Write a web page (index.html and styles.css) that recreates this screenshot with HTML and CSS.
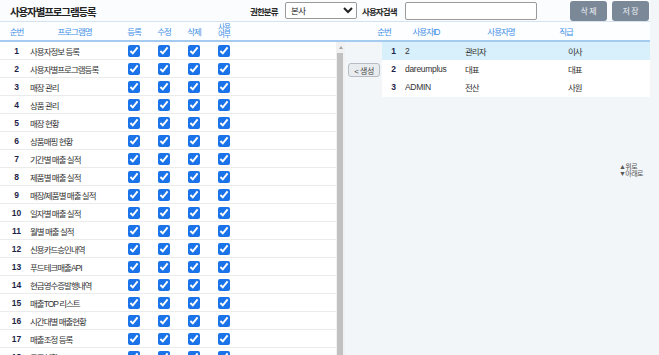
FILE: index.html
```html
<!DOCTYPE html>
<html lang="ko">
<head>
<meta charset="utf-8">
<title>사용자별프로그램등록</title>
<link rel="stylesheet" href="styles.css">
</head>
<body>
<div class="app">
  <div class="topbar">
    <div class="title">사용자별프로그램등록</div>
    <span class="lbl lbl-auth">권한분류</span>
    <select class="auth-select"><option>본사</option></select>
    <span class="lbl lbl-search">사용자검색</span>
    <input class="search" type="text">
    <div class="btns">
      <button class="btn">삭제</button>
      <button class="btn">저장</button>
    </div>
  </div>

  <div class="header">
    <div class="hleft">
      <span class="hnum">순번</span>
      <span>프로그램명</span>
      <span>등록</span>
      <span>수정</span>
      <span>삭제</span>
      <span class="two">사용<br>여부</span>
    </div>
    <div class="hright">
      <span>순번</span>
      <span>사용자ID</span>
      <span>사용자명</span>
      <span>직급</span>
    </div>
  </div>

  <div class="main">
    <div class="left">
      <div class="rows">
        <div class="row"><span class="num">1</span><span class="prog">사용자정보 등록</span><span class="chk"><input type="checkbox" checked></span><span class="chk"><input type="checkbox" checked></span><span class="chk"><input type="checkbox" checked></span><span class="chk"><input type="checkbox" checked></span></div>
        <div class="row"><span class="num">2</span><span class="prog">사용자별프로그램등록</span><span class="chk"><input type="checkbox" checked></span><span class="chk"><input type="checkbox" checked></span><span class="chk"><input type="checkbox" checked></span><span class="chk"><input type="checkbox" checked></span></div>
        <div class="row"><span class="num">3</span><span class="prog">매장 관리</span><span class="chk"><input type="checkbox" checked></span><span class="chk"><input type="checkbox" checked></span><span class="chk"><input type="checkbox" checked></span><span class="chk"><input type="checkbox" checked></span></div>
        <div class="row"><span class="num">4</span><span class="prog">상품 관리</span><span class="chk"><input type="checkbox" checked></span><span class="chk"><input type="checkbox" checked></span><span class="chk"><input type="checkbox" checked></span><span class="chk"><input type="checkbox" checked></span></div>
        <div class="row"><span class="num">5</span><span class="prog">매장 현황</span><span class="chk"><input type="checkbox" checked></span><span class="chk"><input type="checkbox" checked></span><span class="chk"><input type="checkbox" checked></span><span class="chk"><input type="checkbox" checked></span></div>
        <div class="row"><span class="num">6</span><span class="prog">상품매핑 현황</span><span class="chk"><input type="checkbox" checked></span><span class="chk"><input type="checkbox" checked></span><span class="chk"><input type="checkbox" checked></span><span class="chk"><input type="checkbox" checked></span></div>
        <div class="row"><span class="num">7</span><span class="prog">기간별 매출 실적</span><span class="chk"><input type="checkbox" checked></span><span class="chk"><input type="checkbox" checked></span><span class="chk"><input type="checkbox" checked></span><span class="chk"><input type="checkbox" checked></span></div>
        <div class="row"><span class="num">8</span><span class="prog">제품별 매출 실적</span><span class="chk"><input type="checkbox" checked></span><span class="chk"><input type="checkbox" checked></span><span class="chk"><input type="checkbox" checked></span><span class="chk"><input type="checkbox" checked></span></div>
        <div class="row"><span class="num">9</span><span class="prog">매장/제품별 매출 실적</span><span class="chk"><input type="checkbox" checked></span><span class="chk"><input type="checkbox" checked></span><span class="chk"><input type="checkbox" checked></span><span class="chk"><input type="checkbox" checked></span></div>
        <div class="row"><span class="num">10</span><span class="prog">일자별 매출 실적</span><span class="chk"><input type="checkbox" checked></span><span class="chk"><input type="checkbox" checked></span><span class="chk"><input type="checkbox" checked></span><span class="chk"><input type="checkbox" checked></span></div>
        <div class="row"><span class="num">11</span><span class="prog">월별 매출 실적</span><span class="chk"><input type="checkbox" checked></span><span class="chk"><input type="checkbox" checked></span><span class="chk"><input type="checkbox" checked></span><span class="chk"><input type="checkbox" checked></span></div>
        <div class="row"><span class="num">12</span><span class="prog">신용카드승인내역</span><span class="chk"><input type="checkbox" checked></span><span class="chk"><input type="checkbox" checked></span><span class="chk"><input type="checkbox" checked></span><span class="chk"><input type="checkbox" checked></span></div>
        <div class="row"><span class="num">13</span><span class="prog">푸드테크매출API</span><span class="chk"><input type="checkbox" checked></span><span class="chk"><input type="checkbox" checked></span><span class="chk"><input type="checkbox" checked></span><span class="chk"><input type="checkbox" checked></span></div>
        <div class="row"><span class="num">14</span><span class="prog">현금영수증발행내역</span><span class="chk"><input type="checkbox" checked></span><span class="chk"><input type="checkbox" checked></span><span class="chk"><input type="checkbox" checked></span><span class="chk"><input type="checkbox" checked></span></div>
        <div class="row"><span class="num">15</span><span class="prog">매출TOP 리스트</span><span class="chk"><input type="checkbox" checked></span><span class="chk"><input type="checkbox" checked></span><span class="chk"><input type="checkbox" checked></span><span class="chk"><input type="checkbox" checked></span></div>
        <div class="row"><span class="num">16</span><span class="prog">시간대별 매출현황</span><span class="chk"><input type="checkbox" checked></span><span class="chk"><input type="checkbox" checked></span><span class="chk"><input type="checkbox" checked></span><span class="chk"><input type="checkbox" checked></span></div>
        <div class="row"><span class="num">17</span><span class="prog">매출조정 등록</span><span class="chk"><input type="checkbox" checked></span><span class="chk"><input type="checkbox" checked></span><span class="chk"><input type="checkbox" checked></span><span class="chk"><input type="checkbox" checked></span></div>
        <div class="row"><span class="num">18</span><span class="prog">쿠폰현황</span><span class="chk"><input type="checkbox" checked></span><span class="chk"><input type="checkbox" checked></span><span class="chk"><input type="checkbox" checked></span><span class="chk"><input type="checkbox" checked></span></div>
      </div>
      <div class="scroll">
        <div class="arrow"><span class="tri"></span></div>
        <div class="thumb"></div>
      </div>
    </div>

    <div class="mid">
      <button class="gen">&lt; 생성</button>
    </div>

    <div class="right">
      <div class="utable">
        <div class="urow selected"><span class="unum">1</span><span class="latin">2</span><span>관리자</span><span>이사</span></div>
        <div class="urow"><span class="unum">2</span><span class="latin">dareumplus</span><span>대표</span><span>대표</span></div>
        <div class="urow"><span class="unum">3</span><span class="latin">ADMIN</span><span>전산</span><span>사원</span></div>
      </div>
      <div class="move">
        <div>▲위로</div>
        <div>▼아래로</div>
      </div>
    </div>
  </div>
</div>
</body>
</html>
```

FILE: styles.css
```css
html, body {
  margin: 0;
  padding: 0;
}

body {
  background: #f3f6f9;
  font-family: "Liberation Sans", "Noto Sans CJK KR", sans-serif;
  font-size: 8.5px;
  color: #333;
  letter-spacing: -1px;
  overflow: hidden;
}

.app {
  width: 650px;
}

/* top bar */
.topbar {
  height: 21px;
  display: flex;
  align-items: center;
  background: #fbfcfd;
}

.title {
  width: 240px;
  margin-left: 10px;
  padding-top: 2px;
  font-size: 10.5px;
  font-weight: bold;
  letter-spacing: -1.1px;
  color: #222;
}

.lbl {
  font-weight: bold;
  color: #2a2a2a;
  letter-spacing: -0.9px;
}

.lbl-auth {
  width: 35px;
}

.auth-select {
  width: 72px;
  height: 17px;
  margin: 0;
  padding: 0 1px;
  box-sizing: border-box;
  border: 1px solid #9a9a9a;
  border-radius: 2px;
  background: #fff;
  font-family: inherit;
  font-size: 8.5px;
  letter-spacing: -0.5px;
  color: #222;
}

.lbl-search {
  width: 43px;
  margin-left: 5px;
}

.search {
  width: 132px;
  height: 18px;
  margin: 0;
  box-sizing: border-box;
  border: 1px solid #9a9a9a;
  border-radius: 2px;
  background: #fff;
}

.btns {
  margin-left: auto;
  margin-right: 1px;
  display: flex;
  gap: 5px;
}

.btn {
  width: 37px;
  height: 20px;
  padding: 0;
  border: 0;
  border-radius: 3px;
  background: #7b8898;
  color: #eef2f6;
  font-family: inherit;
  font-size: 8px;
  letter-spacing: 1.5px;
  text-indent: 1.5px;
}

/* header strip */
.header {
  display: flex;
  height: 18px;
  border-top: 1px solid #d5e3f0;
  border-bottom: 2px solid #a5cbf0;
  background: #fdfeff;
  color: #3f8fe6;
}

.hleft {
  width: 345px;
  display: grid;
  grid-template-columns: 30px 89px repeat(4, 30px);
  align-items: center;
  text-align: center;
}

.hnum {
  padding-left: 3px;
}

.two {
  font-size: 7.5px;
  line-height: 7.5px;
  letter-spacing: -0.8px;
}

.hright {
  margin-left: 25px;
  display: grid;
  grid-template-columns: 28px 56px 94px 36px;
  align-items: center;
  text-align: center;
}

/* main area */
.main {
  display: flex;
  height: 313px;
}

.left {
  width: 345px;
  display: flex;
}

.rows {
  width: 336px;
  background: #fff;
  overflow: hidden;
}

.row {
  display: grid;
  grid-template-columns: 30px 89px repeat(4, 30px);
  align-items: center;
  height: 17px;
  border-bottom: 1px solid #ebebeb;
}

.num {
  padding-left: 3px;
  text-align: center;
  font-weight: bold;
  letter-spacing: 0;
  color: #1f1f48;
}

.prog {
  white-space: nowrap;
}

.chk {
  display: flex;
  justify-content: center;
}

.chk input {
  width: 12px;
  height: 12px;
  margin: 0;
  accent-color: #1a73e8;
}

.scroll {
  width: 9px;
  display: flex;
  flex-direction: column;
  background: #f1f1f1;
}

.arrow {
  height: 11px;
  display: flex;
  justify-content: center;
  align-items: center;
}

.tri {
  width: 0;
  height: 0;
  border-left: 2px solid transparent;
  border-right: 2px solid transparent;
  border-bottom: 3px solid #a3a3a3;
}

.thumb {
  flex: 1;
  margin: 0 2px 0 1px;
  background: #c1c1c1;
}

.mid {
  width: 37px;
  padding: 21px 0 0 3px;
  box-sizing: border-box;
}

.gen {
  width: 32px;
  height: 14px;
  padding: 0;
  border: 1px solid #b5bcc4;
  border-radius: 3px;
  background: #e9ecef;
  color: #444;
  font-family: inherit;
  font-size: 8px;
  letter-spacing: -0.5px;
}

.right {
  width: 268px;
  display: flex;
  flex-direction: column;
}

.utable {
  background: #fff;
  padding-bottom: 1px;
}

.urow {
  display: grid;
  grid-template-columns: 23px 60px 103px 1fr;
  align-items: center;
  height: 18px;
}

.urow.selected {
  background: #d8f0fb;
}

.unum {
  text-align: center;
  font-weight: bold;
  letter-spacing: 0;
  color: #1f1f48;
}

.latin {
  letter-spacing: -0.3px;
}

.move {
  align-self: flex-end;
  width: 24px;
  margin: 67px 7px 0 0;
  font-size: 7px;
  line-height: 6.5px;
  letter-spacing: -0.6px;
  color: #555;
  white-space: nowrap;
}
```
